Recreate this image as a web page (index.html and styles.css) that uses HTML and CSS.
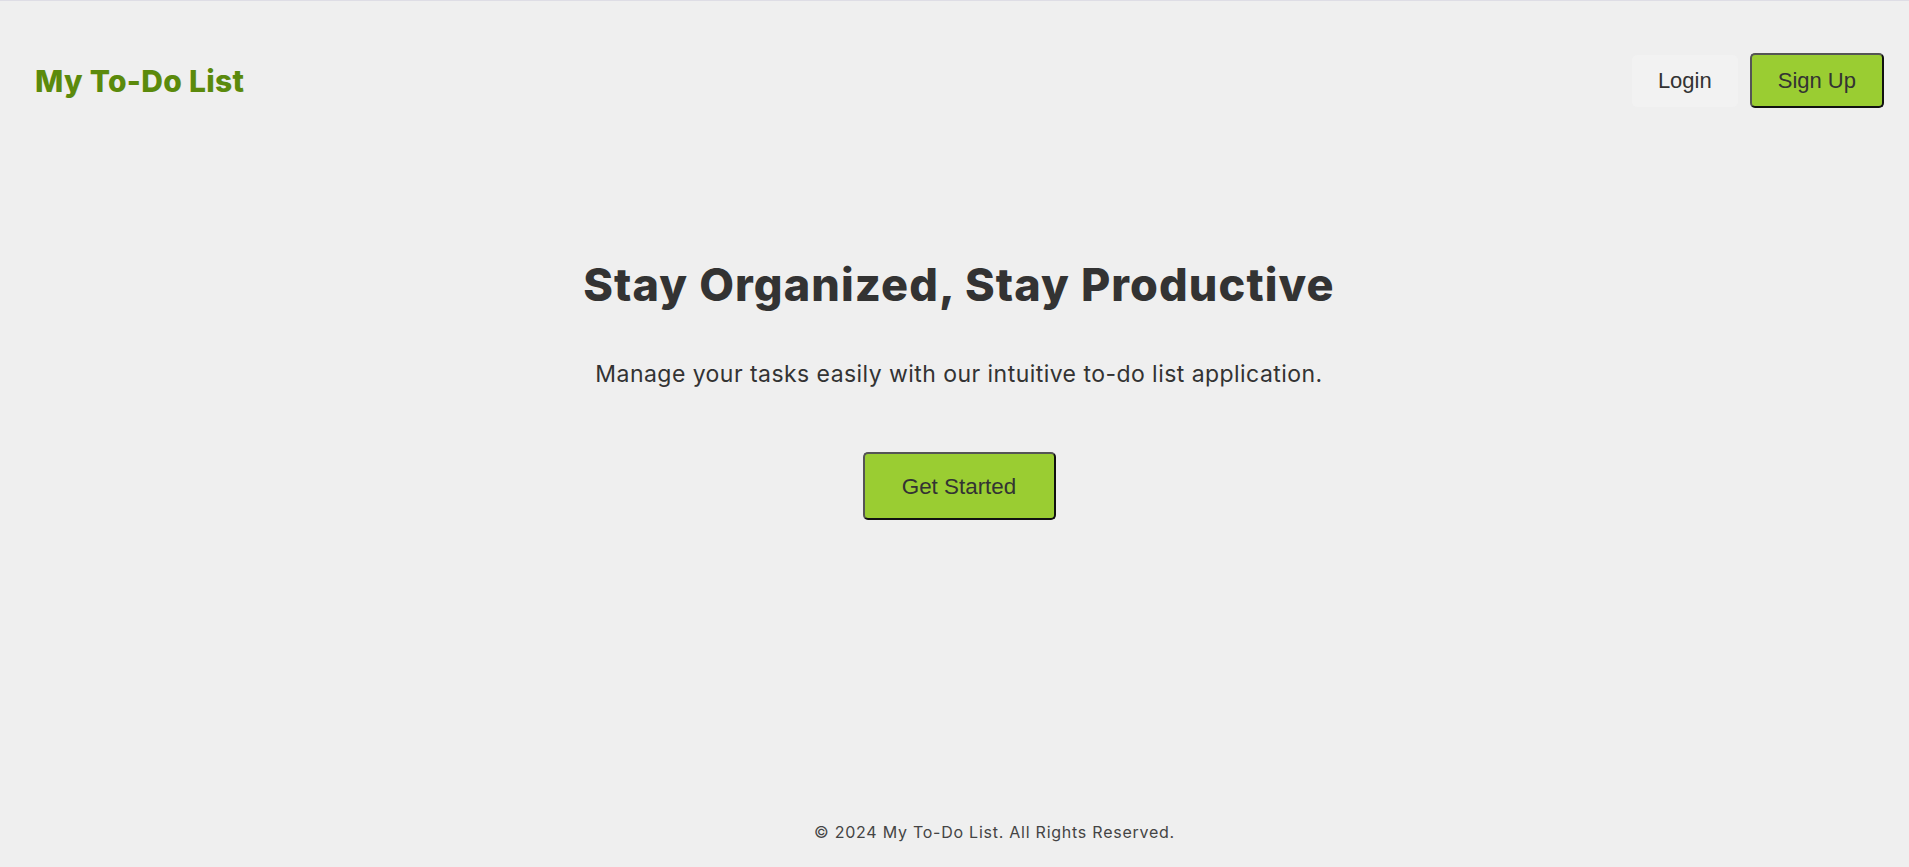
FILE: index.html
```html
<!DOCTYPE html>
<html lang="en">
<head>
<meta charset="utf-8">
<title>My To-Do List</title>
<link rel="stylesheet" href="styles.css">
</head>
<body>
<div class="page">
  <header class="topbar">
    <div class="logo">My To-Do List</div>
    <nav class="auth">
      <button class="btn btn-plain">Login</button>
      <button class="btn btn-green">Sign Up</button>
    </nav>
  </header>
  <main class="hero">
    <h1 class="hero-title">Stay Organized, Stay Productive</h1>
    <p class="hero-sub">Manage your tasks easily with our intuitive to-do list application.</p>
    <button class="btn btn-green btn-large">Get Started</button>
  </main>
  <footer class="footer">
    <p class="footer-text">© 2024 My To-Do List. All Rights Reserved.</p>
  </footer>
</div>
</body>
</html>
```

FILE: styles.css
```css
* { box-sizing: border-box; }

html, body {
  margin: 0;
  padding: 0;
  background: #efefef;
}

body {
  border-top: 1px solid #dedde5;
  font-family: "Inter", "Liberation Sans", sans-serif;
  color: #333;
}

.page {
  min-height: 866px;
  display: flex;
  flex-direction: column;
}

.topbar {
  display: flex;
  justify-content: space-between;
  align-items: center;
  padding: 52px 25px 0 35px;
}

.logo {
  font-family: "Inter", sans-serif;
  font-weight: 800;
  font-size: 30px;
  color: #5b8a0c;
  letter-spacing: 0.3px;
}

.auth {
  display: flex;
  align-items: center;
  gap: 12px;
}

.btn {
  font-family: "Liberation Sans", Arial, sans-serif;
  font-size: 22px;
  line-height: 25px;
  color: #333;
  border-radius: 5px;
  cursor: pointer;
}

.btn-plain {
  background: #f2f2f2;
  border: none;
  padding: 13px 26px;
  height: 52px;
}

.btn-green {
  background: #9acd32;
  border: 2px solid;
  border-color: #555 #111 #111 #555;
  padding: 13px 26px;
  height: 55px;
}

.btn-large {
  font-size: 22.4px;
  padding: 19px 37px;
  height: 68px;
  width: 193px;
}

.hero {
  flex: 1;
  display: flex;
  flex-direction: column;
  align-items: center;
  padding-top: 150px;
  padding-left: 9px;
}

.hero-title {
  margin: 0;
  font-size: 45px;
  line-height: 53px;
  font-weight: 800;
  color: #333;
  letter-spacing: 1.1px;
}

.hero-sub {
  margin: 49px 0 64px;
  font-size: 23px;
  line-height: 28px;
  font-weight: 400;
  color: #333;
  letter-spacing: 0.45px;
}

.footer {
  display: flex;
  justify-content: center;
  padding: 0 0 26px 80px;
}

.footer-text {
  margin: 0;
  font-size: 16px;
  line-height: 18px;
  color: #444;
  letter-spacing: 0.75px;
}
```
